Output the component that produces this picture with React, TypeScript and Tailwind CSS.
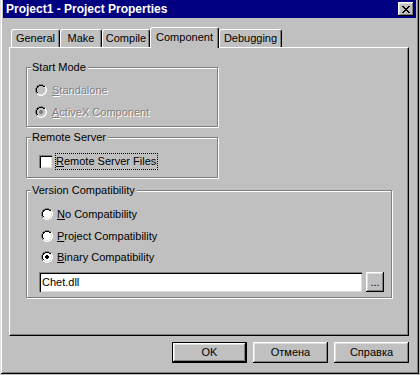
import React from "react";

const RADIO_ROWS = [
  "....GGGG....",
  "..GGKKKKGG..",
  ".GKKFFFFKKW.",
  ".GKFFFFFFLW.",
  "GKFFFFFFFFLW",
  "GKFFFFFFFFLW",
  "GKFFFFFFFFLW",
  "GKFFFFFFFFLW",
  ".GKFFFFFFLW.",
  ".GLLFFFFLLW.",
  "..WWLLLLWW..",
  "....WWWW....",
];
const DOT_ROWS = ["....", ".KK.", "KKKK", "KKKK", ".KK."];

function Radio({ checked, disabled }: { checked?: boolean; disabled?: boolean }) {
  const colors: Record<string, string> = {
    G: "#808080",
    K: "#000000",
    L: "#dfdfdf",
    W: "#ffffff",
    F: disabled ? "#c0c0c0" : "#ffffff",
  };
  const rects: React.ReactNode[] = [];
  RADIO_ROWS.forEach((row, y) => {
    row.split("").forEach((c, x) => {
      if (c !== ".") rects.push(<rect key={`r${x}-${y}`} x={x} y={y} width={1} height={1} fill={colors[c]} />);
    });
  });
  if (checked) {
    DOT_ROWS.forEach((row, dy) => {
      row.split("").forEach((c, dx) => {
        if (c === "K")
          rects.push(
            <rect key={`d${dx}-${dy}`} x={4 + dx} y={3 + dy} width={1} height={1} fill={disabled ? "#808080" : "#000"} />
          );
      });
    });
  }
  return (
    <svg width="12" height="12" viewBox="0 0 12 12" shapeRendering="crispEdges" className="shrink-0">
      {rects}
    </svg>
  );
}

function Group({ label, className, children }: { label: string; className: string; children?: React.ReactNode }) {
  return (
    <div className={`relative border border-[#808080] shadow-[inset_1px_1px_#fff,1px_1px_#fff] ${className}`}>
      <span className="absolute left-[4px] top-[-7px] pl-[1px] pr-[2px] bg-[#c0c0c0] leading-[13px] whitespace-nowrap">
        {label}
      </span>
      {children}
    </div>
  );
}

function Tab({ w, selected, children }: { w: string; selected?: boolean; children: React.ReactNode }) {
  if (selected) {
    return (
      <div
        className={`${w} h-[21px] -mb-px relative z-10 bg-[#c0c0c0] border-l border-t border-r border-white border-r-black rounded-tl-[3px] rounded-tr-[3px] shadow-[inset_-1px_0_#808080] flex justify-center pt-[3px] leading-[13px]`}
      >
        {children}
      </div>
    );
  }
  return (
    <div
      className={`${w} h-[18px] border-l border-t border-r border-white border-r-black rounded-tl-[3px] rounded-tr-[3px] shadow-[inset_-1px_0_#808080] flex justify-center pt-[2px] leading-[13px]`}
    >
      {children}
    </div>
  );
}

const RAISED = "shadow-[inset_-1px_-1px_#000,inset_1px_1px_#fff,inset_-2px_-2px_#808080,inset_2px_2px_#dfdfdf]";
const DIS = "text-[#808080] [text-shadow:1px_1px_0_#fff]";

export default function App() {
  return (
    <div className="w-[420px] h-[375px] bg-[#c0c0c0] font-['Liberation_Sans',Arial,sans-serif] text-[11px] text-black">
      <div className="w-[419px] h-[374px] flex flex-col px-[3px] pb-[3px] shadow-[inset_1px_0_#dfdfdf,inset_-1px_-1px_#000,inset_2px_0_#fff,inset_-2px_-2px_#808080]">
        {/* Title bar */}
        <div className="h-[18px] shrink-0 bg-[#000080] flex items-center justify-between pl-[3px] pr-[2px]">
          <span className="text-white font-bold text-[12px] leading-[14px] whitespace-nowrap">
            Project1 - Project Properties
          </span>
          <div className={`w-[16px] h-[14px] bg-[#c0c0c0] ${RAISED} flex items-center justify-center`}>
            <svg width="8" height="7" viewBox="0 0 8 7" shapeRendering="crispEdges">
              <path
                fillRule="evenodd"
                clipRule="evenodd"
                d="M0 0h2v1h1v1h2V1h1V0h2v1H7v1H6v1H5v1h1v1h1v1h1v1H6V6H5V5H3v1H2v1H0V6h1V5h1V4h1V3H2V2H1V1H0V0z"
                fill="#000"
              />
            </svg>
          </div>
        </div>

        <div className="pt-[9px] pl-[6px] pr-[7px] flex flex-col">
          {/* Tabs */}
          <div className="flex items-end h-[20px] ml-[2px]">
            <Tab w="w-[49px]">General</Tab>
            <Tab w="w-[42px]">Make</Tab>
            <Tab w="w-[48px]">Compile</Tab>
            <Tab w="w-[69px]" selected>
              Component
            </Tab>
            <Tab w="w-[63px]">Debugging</Tab>
          </div>

          {/* Panel */}
          <div className="h-[289px] border-t border-l border-white border-r border-b border-r-black border-b-black shadow-[inset_-1px_-1px_#808080] pl-[16px] pt-[19px] flex flex-col">
            <Group label="Start Mode" className="w-[192px] h-[60px] pt-[14px] pl-[8px]">
              <div className={`flex items-center h-[16px] gap-[5px] ${DIS}`}>
                <Radio disabled />
                <span className="leading-[13px]">
                  <u>S</u>tandalone
                </span>
              </div>
              <div className={`flex items-center h-[16px] gap-[5px] mt-[6px] ${DIS}`}>
                <Radio disabled checked />
                <span className="leading-[13px]">
                  <u>A</u>ctiveX Component
                </span>
              </div>
            </Group>

            <Group label="Remote Server" className="mt-[10px] w-[192px] h-[41px] pt-[15px] pl-[12px]">
              <div className="flex items-center h-[17px] gap-[3px]">
                <div className="w-[13px] h-[13px] bg-white border-t border-l border-[#808080] border-b-white border-r-white shadow-[inset_1px_1px_#000,inset_-1px_-1px_#dfdfdf]" />
                <span className="h-[17px] flex items-center border border-dotted border-black pr-[1px] leading-[13px]">
                  <u>R</u>emote Server Files
                </span>
              </div>
            </Group>

            <Group label="Version Compatibility" className="mt-[12px] w-[366px] h-[108px] pt-[15px] pl-[12px]">
              <div className="ml-[2px] flex flex-col">
                <div className="flex items-center h-[16px] gap-[4px]">
                  <Radio />
                  <span className="leading-[13px]">
                    <u>N</u>o Compatibility
                  </span>
                </div>
                <div className="flex items-center h-[16px] gap-[4px] mt-[6px]">
                  <Radio />
                  <span className="leading-[13px]">
                    <u>P</u>roject Compatibility
                  </span>
                </div>
                <div className="flex items-center h-[16px] gap-[4px] mt-[5px]">
                  <Radio checked />
                  <span className="leading-[13px]">
                    <u>B</u>inary Compatibility
                  </span>
                </div>
              </div>
              <div className="flex items-center mt-[7px] gap-[4px]">
                <div className="w-[323px] h-[20px] bg-white border-t border-l border-[#808080] border-b-white border-r-white shadow-[inset_1px_1px_#000,inset_-1px_-1px_#dfdfdf] flex items-center pl-[2px] leading-[13px]">
                  Chet.dll
                </div>
                <div className={`w-[18px] h-[20px] ${RAISED} flex items-center justify-center leading-[13px] pt-[1px]`}>
                  ...
                </div>
              </div>
            </Group>
          </div>

          {/* Buttons */}
          <div className="flex justify-end gap-[6px] mt-[6px]">
            <div className={`w-[75px] h-[21px] border border-black ${RAISED} flex items-center justify-center leading-[13px]`}>
              OK
            </div>
            <div className={`w-[75px] h-[21px] ${RAISED} flex items-center justify-center leading-[13px]`}>
              Отмена
            </div>
            <div className={`w-[75px] h-[21px] ${RAISED} flex items-center justify-center leading-[13px]`}>
              Справка
            </div>
          </div>
        </div>
      </div>
    </div>
  );
}
